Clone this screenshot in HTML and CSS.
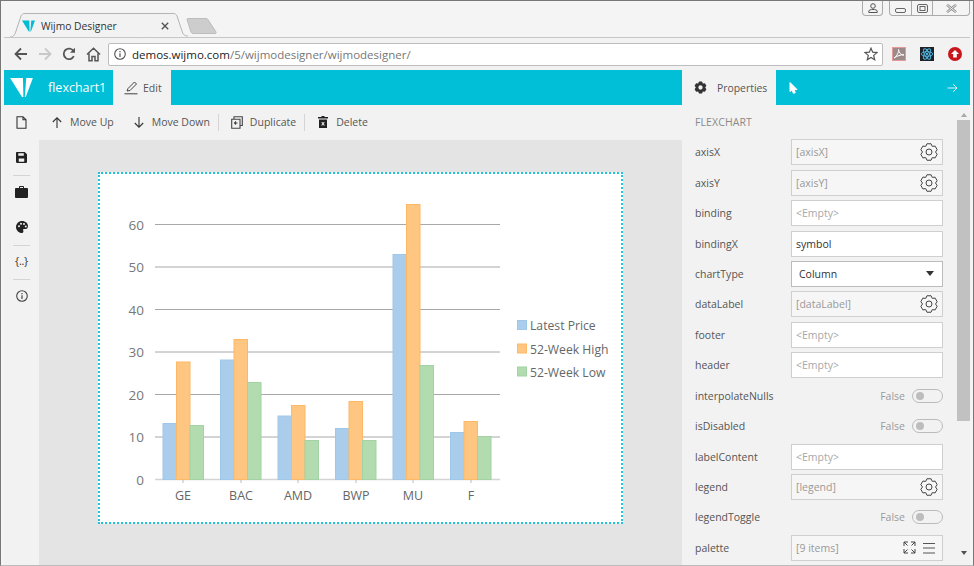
FILE: index.html
```html
<!DOCTYPE html>
<html lang="en">
<head>
<meta charset="utf-8">
<title>Wijmo Designer</title>
<link rel="stylesheet" href="styles.css">
</head>
<body>
<svg class="defs" width="0" height="0" aria-hidden="true">
  <symbol id="cog" viewBox="0 0 18 18"><polygon points="6.94,.75 11.06,.75 12.25,3.37 15.11,3.09 17.17,6.66 15.5,9 17.17,11.34 15.11,14.91 12.25,14.63 11.06,17.25 6.94,17.25 5.75,14.63 2.89,14.91 .83,11.34 2.5,9 .83,6.66 2.89,3.09 5.75,3.37" fill="none" stroke="#444" stroke-linejoin="round"/><circle cx="9" cy="9" r="3" fill="none" stroke="#444"/></symbol>
  <symbol id="wmark" viewBox="0 0 24 20"><path d="M0 0H13.5L14 20H12.5Z"/><path d="M17 0H24L16.5 20H15.5Z"/></symbol>
</svg>
<div class="window">
  <div class="tabstrip">
    <div class="tab">
      <svg class="tab-shape" width="178" height="24" viewBox="0 0 178 24"><path d="M0 24C4 24 5 21 6 18L11 3C12 1 13 .5 15 .5H163C165 .5 166 1 167 3L172 18C173 21 174 23 178 23" fill="#f2f2f2" stroke="#b4b4b4"/></svg>
      <svg class="tab-icon" width="13" height="12" fill="#00bcd4"><use href="#wmark"/></svg>
      <span class="tab-title">Wijmo Designer</span>
      <svg class="tab-close" width="8" height="8" viewBox="0 0 8 8"><path d="M.8.8 7.2 7.2M7.2.8.8 7.2" stroke="#555" stroke-width="1.4"/></svg>
    </div>
    <svg class="newtab" width="31" height="16" viewBox="0 0 31 16"><path d="M1 1.5C1 .8 1.5.5 2 .5H20C21 .5 21.6 1 22 1.700L30 14C30.500 15 30 15.500 29 15.500H7C6 15.500 5.500 15 5 14Z" fill="#cdcdcd" stroke="#bcbcbc"/></svg>
    <div class="winbtns">
      <span class="winbtn user"><svg width="10" height="10" viewBox="0 0 10 10"><circle cx="5" cy="3" r="2.300" fill="none" stroke="#555"/><path d="M.8 9.500V8C.8 7 3 6.500 5 6.500S9.200 7 9.200 8V9.500Z" fill="none" stroke="#555"/></svg></span>
      <span class="wingroup">
        <span class="winbtn min"><svg width="11" height="5" viewBox="0 0 11 5"><rect x=".5" y=".5" width="10" height="4" rx="1.500" fill="none" stroke="#666"/></svg></span>
        <span class="winbtn max"><svg width="11" height="9" viewBox="0 0 11 9"><rect x=".5" y=".5" width="10" height="8" rx="1.500" fill="none" stroke="#666"/><rect x="3" y="2.500" width="5" height="4" fill="none" stroke="#666"/></svg></span>
        <span class="winbtn cls"><svg width="11" height="9" viewBox="0 0 11 9"><path d="M1 .8 10 8.200M10 .8 1 8.200" stroke="#888" stroke-width="2.400"/><path d="M1 .8 10 8.200M10 .8 1 8.200" stroke="#f2f2f2" stroke-width="1"/></svg></span>
      </span>
    </div>
  </div>
  <div class="addressbar">
    <svg class="nav" width="14" height="14" viewBox="0 0 14 14"><path d="M13 7H2M7 1.500 1.500 7 7 12.500" fill="none" stroke="#555" stroke-width="1.800"/></svg>
    <svg class="nav" width="14" height="14" viewBox="0 0 14 14"><path d="M1 7H12M7 1.500 12.500 7 7 12.500" fill="none" stroke="#c8c8c8" stroke-width="1.800"/></svg>
    <svg class="nav" width="14" height="14" viewBox="0 0 14 14"><path d="M11.800 9.200A5.300 5.300 0 1 1 11.500 4" fill="none" stroke="#555" stroke-width="1.800"/><path d="M13 .8V5.800H8Z" fill="#555"/></svg>
    <svg class="nav" width="15" height="15" viewBox="0 0 15 15"><path d="M1 7.500 7.500 1.300 14 7.500M3 6.500V13.800H6V9.500H9V13.800H12V6.500" fill="none" stroke="#555" stroke-width="1.500"/></svg>
    <div class="omnibox">
      <svg class="info" width="12" height="12" viewBox="0 0 12 12"><circle cx="6" cy="6" r="5.300" fill="none" stroke="#555" stroke-width="1.100"/><path d="M6 5.200V9M6 3V4.200" stroke="#555" stroke-width="1.200"/></svg>
      <span class="url"><b>demos.wijmo.com</b>/5/wijmodesigner/wijmodesigner/</span>
      <svg class="star" width="14" height="14" viewBox="0 0 14 14"><path d="M7 1.200 8.700 5.200 13 5.600 9.700 8.400 10.700 12.700 7 10.400 3.300 12.700 4.300 8.400 1 5.600 5.300 5.200Z" fill="none" stroke="#555" stroke-width="1.200"/></svg>
    </div>
    <svg class="ext" width="14" height="14" viewBox="0 0 14 14"><rect x=".5" y=".5" width="13" height="13" fill="#9c8a8a" stroke="#e29a9a"/><path d="M2 11C5 9 7 5 6.500 2.500 7 6 9 8 12 8 9 7.500 5 9 2 11Z" fill="none" stroke="#fff"/></svg>
    <svg class="ext" width="14" height="14" viewBox="0 0 14 14"><rect width="14" height="14" fill="#1c2228"/><g fill="none" stroke="#4fb3dc"><ellipse cx="7" cy="7" rx="5.800" ry="2.300"/><ellipse cx="7" cy="7" rx="5.800" ry="2.300" transform="rotate(60 7 7)"/><ellipse cx="7" cy="7" rx="5.800" ry="2.300" transform="rotate(120 7 7)"/></g><circle cx="7" cy="7" r="1.200" fill="#4fb3dc"/></svg>
    <svg class="ext" width="14" height="14" viewBox="0 0 14 14"><circle cx="7" cy="7" r="7" fill="#c8171c"/><path d="M7 3 11 7H8.800V10.500H5.200V7H3Z" fill="#fff"/></svg>
  </div>
  <div class="apphead">
    <div class="brand">
      <svg class="logo" width="23" height="19" fill="#fff"><use href="#wmark"/></svg>
      <span class="doc">flexchart1</span>
    </div>
    <div class="headtab edit">
      <svg width="14" height="14" viewBox="0 0 14 14"><path d="M3 10 4 7.500 10.500 1 12.500 3 6 9.500ZM.5 12.800H13.500" fill="none" stroke="#444"/></svg>
      <span>Edit</span>
    </div>
    <div class="headfill"></div>
    <div class="headtab props-tab">
      <svg width="13" height="13" viewBox="0 0 18 18"><path fill="#333" fill-rule="evenodd" d="M6.940.75H11.060L12.250 3.370 15.110 3.090 17.170 6.660 15.500 9 17.170 11.340 15.110 14.910 12.250 14.630 11.060 17.250H6.940L5.750 14.630 2.890 14.910.83 11.340 2.500 9 .83 6.660 2.890 3.090 5.750 3.370ZM9 6A3 3 0 1 0 9 12 3 3 0 1 0 9 6Z"/></svg>
      <span>Properties</span>
    </div>
    <div class="headend">
      <svg width="9" height="12" viewBox="0 0 9 12"><path d="M1 .5V9.500L3 8 4.500 11.500 6.300 10.500 5 7.500H8Z" fill="#fff" stroke="#fff" stroke-linejoin="round"/></svg>
      <svg width="11" height="10" viewBox="0 0 11 10"><path d="M.5 5H10M6 1 10 5 6 9" fill="none" stroke="#fff" stroke-opacity=".85"/></svg>
    </div>
  </div>
  <div class="appbody">
    <nav class="sidebar">
      <svg width="11" height="13" viewBox="0 0 11 13"><path d="M1 .7H7L10 3.700V12.300H1ZM7 .7V3.700H10" fill="none" stroke="#333" stroke-width="1.100"/></svg>
      <svg width="11" height="11" viewBox="0 0 12 12"><path fill="#222" fill-rule="evenodd" d="M0 1C0 .5.500 0 1 0H9.500L12 2.500V11C12 11.500 11.500 12 11 12H1C.5 12 0 11.500 0 11ZM2.500 1.300V4H8.500V1.300ZM3 7V10.500H9V7Z"/></svg>
      <span class="sep"></span>
      <svg width="13" height="12" viewBox="0 0 13 12"><path fill="#222" fill-rule="evenodd" d="M4 2V1C4 .5 4.500 0 5 0H8C8.500 0 9 .5 9 1V2H12C12.500 2 13 2.500 13 3V11C13 11.500 12.500 12 12 12H1C.5 12 0 11.500 0 11V3C0 2.500.5 2 1 2ZM5 2H8V1H5Z"/></svg>
      <svg width="12" height="12" viewBox="0 0 12 12"><path fill="#222" fill-rule="evenodd" d="M6 0C9.500 0 12 2.300 12 5.200 12 7.200 10.500 8 9 8H8C7 8 6.800 9 7.200 9.500 7.800 10.300 7.300 12 6 12 2.700 12 0 9.300 0 6S2.700 0 6 0ZM3 4.200A1 1 0 1 0 3 6.200 1 1 0 1 0 3 4.200ZM5 1.800A1 1 0 1 0 5 3.800 1 1 0 1 0 5 1.800ZM8 2A1 1 0 1 0 8 4 1 1 0 1 0 8 2ZM9.800 4.400A1 1 0 1 0 9.800 6.400 1 1 0 1 0 9.800 4.400Z"/></svg>
      <span class="sep"></span>
      <span class="braces">{..}</span>
      <span class="sep"></span>
      <svg width="12" height="12" viewBox="0 0 12 12"><circle cx="6" cy="6" r="5.300" fill="none" stroke="#444" stroke-width="1.100"/><path d="M6 5.200V9M6 3V4.200" stroke="#444" stroke-width="1.200"/></svg>
    </nav>
    <main class="main">
      <div class="toolbar">
        <button class="tool up"><svg width="10" height="11" viewBox="0 0 10 11"><path d="M5 11V1M.8 5 5 .8 9.200 5" fill="none" stroke="#333" stroke-width="1.100"/></svg><span>Move Up</span></button>
        <button class="tool down"><svg width="10" height="11" viewBox="0 0 10 11"><path d="M5 0V10M.8 6 5 10.200 9.200 6" fill="none" stroke="#333" stroke-width="1.100"/></svg><span>Move Down</span></button>
        <span class="vsep"></span>
        <button class="tool dup"><svg width="12" height="13" viewBox="0 0 12 13"><path d="M3 3V.7H11.300V9.500H9M.7 3.200H9V12.300H.7ZM6.500 7H3.500M5 5.500 3.500 7 5 8.500" fill="none" stroke="#444" stroke-width="1.100"/></svg><span>Duplicate</span></button>
        <span class="vsep"></span>
        <button class="tool del"><svg width="10" height="12" viewBox="0 0 10 12"><path fill="#222" fill-rule="evenodd" d="M3.500 0H6.500V1H10V2.500H0V1H3.500ZM1 3.500H9V12H1ZM3.200 6 4.300 7.500 3.200 9.500H4.300L5 8.300 5.700 9.500H6.800L5.700 7.500 6.800 6H5.700L5 6.900 4.300 6Z"/></svg><span>Delete</span></button>
      </div>
      <div class="canvas">
        <div class="chartcard">
          <svg class="chart" width="525" height="352" viewBox="98 172 525 352">
            <g class="grid">
              <line x1="155" x2="500" y1="224.500" y2="224.500"/>
              <line x1="155" x2="500" y1="267" y2="267"/>
              <line x1="155" x2="500" y1="309.500" y2="309.500"/>
              <line x1="155" x2="500" y1="352" y2="352"/>
              <line x1="155" x2="500" y1="394.500" y2="394.500"/>
              <line x1="155" x2="500" y1="437" y2="437"/>
            </g>
            <line class="axis" x1="155" x2="500" y1="479.500" y2="479.500"/>
            <g class="ticks">
              <line x1="183" x2="183" y1="480" y2="483"/><line x1="241" x2="241" y1="480" y2="483"/><line x1="298" x2="298" y1="480" y2="483"/><line x1="356" x2="356" y1="480" y2="483"/><line x1="413" x2="413" y1="480" y2="483"/><line x1="471" x2="471" y1="480" y2="483"/>
            </g>
            <g class="s1">
              <rect x="163" y="423.500" width="13.500" height="56"/><rect x="220.500" y="360" width="13.500" height="119.500"/><rect x="278" y="416" width="13.500" height="63.500"/><rect x="335.500" y="428.500" width="13.500" height="51"/><rect x="393" y="254.500" width="13.500" height="225"/><rect x="450.500" y="432.500" width="13.500" height="47"/>
            </g>
            <g class="s2">
              <rect x="176.500" y="362" width="13.500" height="117.500"/><rect x="234" y="339.500" width="13.500" height="140"/><rect x="291.500" y="405.500" width="13.500" height="74"/><rect x="349" y="401.500" width="13.500" height="78"/><rect x="406.500" y="204.500" width="13.500" height="275"/><rect x="464" y="421.500" width="13.500" height="58"/>
            </g>
            <g class="s3">
              <rect x="190" y="425.500" width="13.500" height="54"/><rect x="247.500" y="382.500" width="13.500" height="97"/><rect x="305" y="440.500" width="13.500" height="39"/><rect x="362.500" y="440.500" width="13.500" height="39"/><rect x="420" y="365.500" width="13.500" height="114"/><rect x="477.500" y="436.500" width="13.500" height="43"/>
            </g>
            <g class="ylab">
              <text x="144" y="229.500">60</text><text x="144" y="272">50</text><text x="144" y="314.500">40</text><text x="144" y="357">30</text><text x="144" y="399.500">20</text><text x="144" y="442">10</text><text x="144" y="484.500">0</text>
            </g>
            <g class="xlab">
              <text x="183" y="500">GE</text><text x="241" y="500">BAC</text><text x="298" y="500">AMD</text><text x="356" y="500">BWP</text><text x="413" y="500">MU</text><text x="471" y="500">F</text>
            </g>
            <g class="legend">
              <rect class="s1r" x="517.500" y="320.500" width="9" height="9"/><text x="530" y="330">Latest Price</text>
              <rect class="s2r" x="517.500" y="344" width="9" height="9"/><text x="530" y="353.500">52-Week High</text>
              <rect class="s3r" x="517.500" y="367" width="9" height="9"/><text x="530" y="377">52-Week Low</text>
            </g>
          </svg>
        </div>
      </div>
    </main>
    <aside class="props">
      <div class="props-scroll">
        <h2 class="props-title">FLEXCHART</h2>
        <div class="row"><label>axisX</label><div class="field ro"><span>[axisX]</span><svg width="18" height="18"><use href="#cog"/></svg></div></div>
        <div class="row"><label>axisY</label><div class="field ro"><span>[axisY]</span><svg width="18" height="18"><use href="#cog"/></svg></div></div>
        <div class="row"><label>binding</label><div class="field empty"><span>&lt;Empty&gt;</span></div></div>
        <div class="row"><label>bindingX</label><div class="field value"><span>symbol</span></div></div>
        <div class="row"><label>chartType</label><div class="field select"><span>Column</span><i class="caret"></i></div></div>
        <div class="row"><label>dataLabel</label><div class="field ro"><span>[dataLabel]</span><svg width="18" height="18"><use href="#cog"/></svg></div></div>
        <div class="row"><label>footer</label><div class="field empty"><span>&lt;Empty&gt;</span></div></div>
        <div class="row"><label>header</label><div class="field empty"><span>&lt;Empty&gt;</span></div></div>
        <div class="row"><label>interpolateNulls</label><div class="toggle"><span>False</span><i class="switch"></i></div></div>
        <div class="row"><label>isDisabled</label><div class="toggle"><span>False</span><i class="switch"></i></div></div>
        <div class="row"><label>labelContent</label><div class="field empty"><span>&lt;Empty&gt;</span></div></div>
        <div class="row"><label>legend</label><div class="field ro"><span>[legend]</span><svg width="18" height="18"><use href="#cog"/></svg></div></div>
        <div class="row"><label>legendToggle</label><div class="toggle"><span>False</span><i class="switch"></i></div></div>
        <div class="row"><label>palette</label><div class="field ro"><span>[9 items]</span><svg class="expand" width="13" height="13" viewBox="0 0 13 13"><path d="M1 5V1H5M1 1 4.500 4.500M8 1H12V5M12 1 8.500 4.500M1 8V12H5M1 12 4.500 8.500M8 12H12V8M12 12 8.500 8.500" fill="none" stroke="#444"/></svg><svg class="lines" width="12" height="12" viewBox="0 0 12 12"><path d="M0 1.500H12M0 6H12M0 11H12" stroke="#555"/></svg></div></div>
      </div>
      <div class="scrollbar">
        <i class="arrow-up"></i>
        <i class="thumb"></i>
        <i class="arrow-down"></i>
      </div>
    </aside>
  </div>
</div>
</body>
</html>
```
FILE: styles.css
```css
* { box-sizing: border-box; }
html, body { margin: 0; height: 100%; }
body { font-family: "Open Sans", "Liberation Sans", sans-serif; overflow: hidden; background: #f2f2f2; }
.defs { position: absolute; }

.window { width: 974px; height: 566px; display: flex; flex-direction: column; border: 1px solid #777; border-bottom-color: #bbb; padding: 0 3px; background: #f4f4f4; overflow: hidden; }

.tabstrip { height: 36px; flex: none; display: flex; align-items: flex-end; position: relative; padding-left: 6px; }
.tab { position: relative; width: 178px; height: 23px; display: flex; align-items: center; padding-left: 12px; margin-bottom: 0; }
.tab-shape { position: absolute; left: 0; top: -1px; }
.tab-icon, .tab-title, .tab-close { position: relative; }
.tab-title { font-family: "Open Sans", sans-serif; font-size: 10.300px; color: #333; margin-left: 6px; flex: 1; }
.tab-close { margin-right: 19px; }
.newtab { margin: 0 0 3px -2px; }
.winbtns { position: absolute; right: 0; top: 0; display: flex; gap: 6px; }
.wingroup { display: flex; border: 1px solid #aaa; border-top: 0; border-radius: 0 0 4px 4px; height: 15px; }
.winbtn { display: flex; align-items: center; justify-content: center; height: 15px; }
.winbtn.user { width: 21px; border: 1px solid #aaa; border-top: 0; border-radius: 0 0 4px 4px; }
.winbtn.min { width: 22px; border-right: 1px solid #aaa; height: 14px; padding-top: 4px; }
.winbtn.max { width: 21px; border-right: 1px solid #aaa; height: 14px; }
.winbtn.cls { width: 36px; height: 14px; }

.addressbar { height: 33px; flex: none; display: flex; align-items: center; background: #f2f2f2; border-top: 1px solid #c6c6c6; padding: 0 12px 0 10px; }
.nav { flex: none; margin-right: 10px; }
.omnibox { width: 775px; height: 23px; margin-left: -3px; flex: none; display: flex; align-items: center; background: #fff; border: 1px solid #bdbdbd; border-radius: 2px; padding: 0 4px 0 5px; margin-right: 9px; }
.info { flex: none; }
.url { font-family: "Open Sans", "Liberation Sans", sans-serif; font-size: 11.500px; color: #777; margin-left: 6px; flex: 1; }
.url b { font-weight: 400; color: #222; }
.ext { flex: none; margin-right: 14px; }
.ext:last-child { margin-right: 0; }

.apphead { height: 35px; flex: none; display: flex; background: #00bfd7; color: #fff; }
.brand { width: 109px; display: flex; align-items: center; padding-left: 6px; }
.doc { font-size: 12.500px; margin-left: 15px; }
.headtab { display: flex; align-items: center; background: #f2f2f2; color: #555; font-size: 10.500px; }
.headtab.edit { width: 58px; padding-left: 11px; gap: 5px; }
.headtab.props-tab { width: 94px; padding-left: 12px; gap: 10px; font-size: 10.400px; }
.headfill { flex: 1; }
.headend { width: 194px; display: flex; align-items: center; justify-content: space-between; padding: 0 12px 0 13px; }

.appbody { flex: 1; min-height: 0; display: flex; background: #f2f2f2; }
.sidebar { width: 35px; flex: none; display: flex; flex-direction: column; align-items: center; padding-top: 11px; }
.sidebar > svg { flex: none; margin-bottom: 23px; }
.sidebar .sep { width: 17px; height: 1px; background: #d4d4d4; margin: -11px 0 10px; flex: none; }
.braces { font-size: 11px; line-height: 14px; height: 14px; color: #333; margin: -2px 0 22px; letter-spacing: -.3px; flex: none; }

.main { flex: 1; min-width: 0; display: flex; flex-direction: column; }
.toolbar { height: 35px; flex: none; display: flex; align-items: center; padding: 0 0 1px 13px; }
.tool { border: 0; background: none; padding: 0; font: inherit; font-size: 10.500px; color: #555; display: flex; align-items: center; gap: 8px; }
.tool.down { margin-left: 20px; margin-right: 8px; }
.tool.dup { margin: 0 8px 0 12px; gap: 7px; }
.tool.del { margin-left: 13px; gap: 8px; }
.vsep { width: 1px; height: 17px; background: #d4d4d4; flex: none; }
.canvas { flex: 1; min-height: 0; background: #e4e4e4; padding: 32px 0 0 59px; }
.chartcard { width: 525px; height: 352px; background: #fff; border: 2px dotted #1cc4d8; position: relative; }
.chart { position: absolute; left: -2px; top: -2px; }
.grid line { stroke: #a8a8a8; stroke-width: 1; }
.axis { stroke: #d4d4d4; stroke-width: 1.500; }
.ticks line { stroke: #bbb; }
.s1 rect, .s1r { fill: #aacdec; stroke: #9fc7ea; }
.s2 rect, .s2r { fill: #fec681; stroke: #fdb868; }
.s3 rect, .s3r { fill: #b2dbb0; stroke: #a3d3a4; }
.ylab text { font-size: 13.500px; fill: #777; text-anchor: end; }
.xlab text { font-size: 12.500px; fill: #666; text-anchor: middle; }
.legend text { font-size: 12.200px; fill: #666; }

.props { width: 288px; flex: none; display: flex; }
.props-scroll { flex: 1; min-width: 0; padding: 0 14px 0 13px; }
.props-title { margin: 0; height: 32px; font-size: 10.500px; font-weight: 400; color: #8a8a8a; line-height: 34px; letter-spacing: .1px; }
.row { height: 30.450px; display: flex; align-items: center; justify-content: space-between; }
.row label { font-size: 10.500px; color: #555; }
.field { width: 152px; height: 26px; border: 1px solid #cfcfcf; display: flex; align-items: center; padding: 0 4px 0 4px; font-size: 10.500px; }
.field span { flex: 1; }
.field.ro { background: #f6f6f6; color: #999; }
.field.empty { background: #fff; color: #a8a8a8; }
.field.value { background: #fff; color: #333; }
.field.select { background: #fff; color: #333; padding: 0 8px 0 7px; border-color: #bcbcbc; }
.caret { border: 4.500px solid transparent; border-top: 5px solid #333; border-bottom: 0; }
.expand { margin-right: 7px; }
.lines { margin-right: 3px; }
.toggle { width: 152px; display: flex; align-items: center; justify-content: flex-end; gap: 7px; font-size: 10.500px; color: #9a9a9a; }
.switch { width: 31px; height: 14px; border: 1px solid #bbb; border-radius: 7px; background: #f2f2f2; position: relative; }
.switch::before { content: ""; position: absolute; left: 2.500px; top: 2px; width: 8px; height: 8px; border-radius: 50%; background: #bdbdbd; }

.scrollbar { width: 13px; flex: none; display: flex; flex-direction: column; align-items: center; background: #f2f2f2; padding-top: 8px; }
.arrow-up { flex: none; border: 3.500px solid transparent; border-bottom: 4px solid #a8a8a8; border-top: 0; margin-bottom: 3px; }
.thumb { flex: none; width: 13px; height: 301px; background: #c1c1c1; }
.arrow-down { flex: none; margin-top: 130px; border: 3.500px solid transparent; border-top: 4px solid #505050; border-bottom: 0; }
```
